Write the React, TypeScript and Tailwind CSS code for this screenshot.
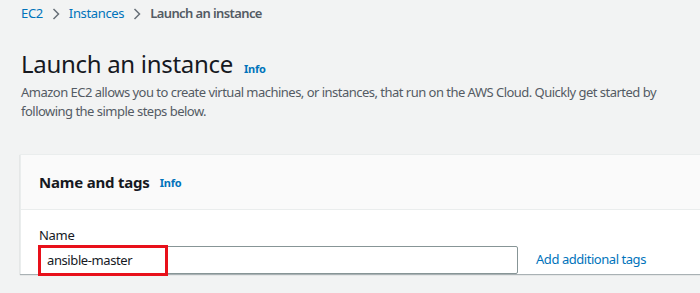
import React from "react";

const font = { fontFamily: '"Noto Sans", "Open Sans", sans-serif' };

function Chevron() {
  return (
    <svg width="8" height="12" viewBox="0 0 8 12" className="mx-[9px]">
      <path d="M1.5 1 L6.5 6 L1.5 11" fill="none" stroke="#687078" strokeWidth="1.5" />
    </svg>
  );
}

export default function App() {
  return (
    <div className="w-[700px] h-[293px] overflow-hidden bg-[#f2f3f3] text-[#16191f]" style={font}>
      <div className="pl-[21px]">
        {/* Breadcrumbs */}
        <nav className="flex items-center h-[28px] text-[13px] tracking-[-0.35px]">
          <span className="text-[#0073bb]">EC2</span>
          <Chevron />
          <span className="text-[#0073bb]">Instances</span>
          <Chevron />
          <span className="font-semibold text-[#545b64] tracking-[-0.6px]">Launch an instance</span>
        </nav>

        {/* Page header */}
        <div className="mt-[21px] flex items-baseline">
          <h1 className="text-[24px] leading-[30px] font-normal tracking-[-0.3px]">Launch an instance</h1>
          <span className="ml-[11px] text-[11px] font-bold text-[#0073bb] tracking-[-0.2px]">Info</span>
        </div>
        <p className="mt-[4px] w-[660px] text-[13px] leading-[19px] text-[#545b64] tracking-[-0.52px]">
          Amazon EC2 allows you to create virtual machines, or instances, that run on the AWS
          Cloud. Quickly get started by following the simple steps below.
        </p>
      </div>

      {/* Name and tags card */}
      <div className="ml-[20px] mt-[33px] w-[720px] border-l border-t border-[#eaeded] bg-white shadow-[0_1px_1px_0_rgba(0,28,36,0.3)]">
        <div className="flex items-center h-[55px] pl-[18px] bg-[#fafafa] border-b border-[#eaeded]">
          <h2 className="text-[15px] font-bold leading-[20px] tracking-[-0.2px]">Name and tags</h2>
          <span className="ml-[10px] mt-[2px] text-[11px] font-bold text-[#0073bb] tracking-[-0.2px]">Info</span>
        </div>
        <div className="pl-[18px] pt-[16px]">
          <label className="block text-[13px] leading-[18px] text-[#16191f] tracking-[-0.3px]">Name</label>
          <div className="mt-[2px] flex items-center">
            <div className="relative w-[479px] h-[28px] border border-[#879596] rounded-[2px] bg-white">
              <span className="absolute left-[7px] top-[3px] text-[13px] leading-[20px] tracking-[-0.4px]">ansible-master</span>
              <div className="absolute -left-[2px] -top-[2px] w-[130px] h-[31px] border-[3px] border-[#e8101a]" />
            </div>
            <span className="ml-[18px] text-[13px] text-[#0073bb] tracking-[-0.45px]">Add additional tags</span>
          </div>
        </div>
      </div>
    </div>
  );
}
